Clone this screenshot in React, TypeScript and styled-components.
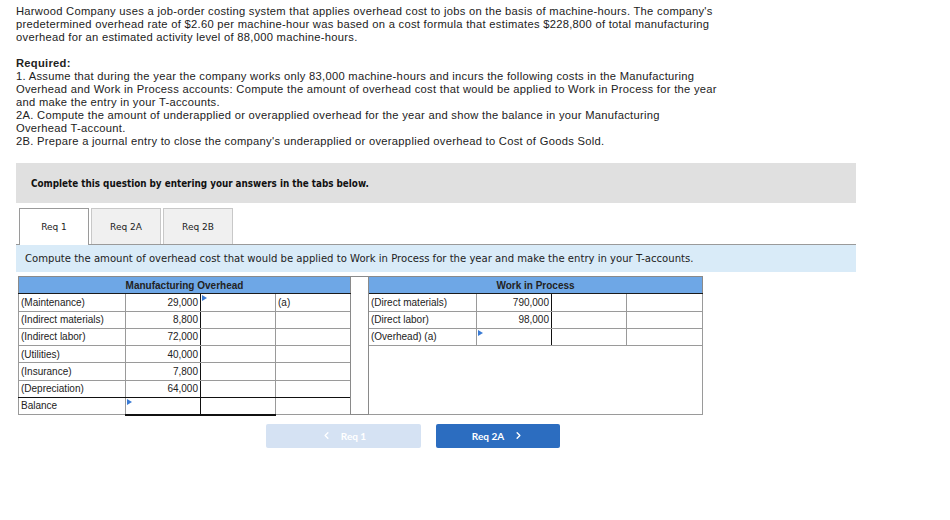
import React from 'react';
import styled, { createGlobalStyle, css } from 'styled-components';
import { ChevronLeft, ChevronRight } from 'lucide-react';

const GlobalStyle = createGlobalStyle`
    body {
        margin: 0;
        background: #ffffff;
        font-family: 'Liberation Sans', Arial, sans-serif;
    }
`;

const overheadRows = [
    { label: '(Maintenance)', amount: '29,000', right: '(a)' },
    { label: '(Indirect materials)', amount: '8,800' },
    { label: '(Indirect labor)', amount: '72,000' },
    { label: '(Utilities)', amount: '40,000' },
    { label: '(Insurance)', amount: '7,800' },
    { label: '(Depreciation)', amount: '64,000' },
];

const wipRows = [
    { label: '(Direct materials)', amount: '790,000' },
    { label: '(Direct labor)', amount: '98,000' },
    { label: '(Overhead) (a)', amount: '', flag: true },
];

export default function App() {
    return <Page>
        <GlobalStyle />
        <Paragraph>
            <Line>Harwood Company uses a job-order costing system that applies overhead cost to jobs on the basis of machine-hours. The company's</Line>
            <Line>predetermined overhead rate of $2.60 per machine-hour was based on a cost formula that estimates $228,800 of total manufacturing</Line>
            <Line>overhead for an estimated activity level of 88,000 machine-hours.</Line>
        </Paragraph>
        <Paragraph>
            <Line $bold>Required:</Line>
            <Line>1. Assume that during the year the company works only 83,000 machine-hours and incurs the following costs in the Manufacturing</Line>
            <Line>Overhead and Work in Process accounts: Compute the amount of overhead cost that would be applied to Work in Process for the year</Line>
            <Line>and make the entry in your T-accounts.</Line>
            <Line>2A. Compute the amount of underapplied or overapplied overhead for the year and show the balance in your Manufacturing</Line>
            <Line>Overhead T-account.</Line>
            <Line>2B. Prepare a journal entry to close the company's underapplied or overapplied overhead to Cost of Goods Sold.</Line>
        </Paragraph>

        <Panel>
            <Banner>Complete this question by entering your answers in the tabs below.</Banner>

            <TabBar>
                <Tab $active>Req 1</Tab>
                <Tab>Req 2A</Tab>
                <Tab>Req 2B</Tab>
            </TabBar>

            <Instruction>
                Compute the amount of overhead cost that would be applied to Work in Process for the year and make the entry in your T-accounts.
            </Instruction>

            <TTable>
                <colgroup>
                    <col style={{ width: 107 }} />
                    <col style={{ width: 75 }} />
                    <col style={{ width: 75 }} />
                    <col style={{ width: 75 }} />
                    <col style={{ width: 18 }} />
                    <col style={{ width: 108 }} />
                    <col style={{ width: 75 }} />
                    <col style={{ width: 75 }} />
                    <col style={{ width: 76 }} />
                </colgroup>
                <tbody>
                    <Row>
                        <HeadCell colSpan={4}>Manufacturing Overhead</HeadCell>
                        <Spacer rowSpan={8} />
                        <HeadCell colSpan={4}>Work in Process</HeadCell>
                    </Row>
                    {overheadRows.map((r, i) => {
                        const last = i === overheadRows.length - 1;
                        const w = wipRows[i];
                        return <Row key={r.label}>
                            <Cell $bottom={last ? 'dark' : undefined}>{r.label}</Cell>
                            <Cell $num $tline $bottom={last ? 'dark' : undefined}>{r.amount}</Cell>
                            <Cell $flag={i === 0} $bottom={last ? 'dark' : undefined}></Cell>
                            <Cell $bottom={last ? 'dark' : undefined}>{r.right}</Cell>
                            {w && <>
                                <Cell>{w.label}</Cell>
                                <Cell $num $tline $flag={w.flag}>{w.amount}</Cell>
                                <Cell></Cell>
                                <Cell></Cell>
                            </>}
                            {i === wipRows.length && <Cell colSpan={4} rowSpan={4}></Cell>}
                        </Row>;
                    })}
                    <Row>
                        <Cell>Balance</Cell>
                        <Cell $tline $flag $bottom="thick"></Cell>
                        <Cell $bottom="thick"></Cell>
                        <Cell></Cell>
                    </Row>
                </tbody>
            </TTable>

            <NavBar>
                <NavButton $disabled>
                    <ChevronLeft size={11} strokeWidth={3} />
                    Req 1
                </NavButton>
                <NavButton>
                    Req 2A
                    <ChevronRight size={11} strokeWidth={3} />
                </NavButton>
            </NavBar>
        </Panel>
    </Page>;
}

const Page = styled.div`
    padding: 5px 16px 20px 16px;
    color: #222222;
`;

const Paragraph = styled.div`
    margin: 0 0 13px 0;
    font-size: 11.2px;
    letter-spacing: 0.28px;
`;

const Line = styled.div<{ $bold?: boolean }>`
    height: 13px;
    line-height: 13px;
    white-space: nowrap;
    font-weight: ${({ $bold }) => ($bold ? 700 : 400)};
`;

const Panel = styled.div`
    width: 840px;
    margin-top: 15px;
`;

const Banner = styled.div`
    height: 40px;
    background: #e0e0e0;
    display: flex;
    align-items: center;
    padding-left: 15px;
    font-family: 'DejaVu Sans Condensed', 'DejaVu Sans', sans-serif;
    font-weight: 700;
    font-size: 9.8px;
    color: #111111;
`;

const TabBar = styled.div`
    display: flex;
    gap: 2px;
    margin-top: 5px;
    padding-left: 3px;
    border-bottom: 1px solid #9a9a9a;
`;

const Tab = styled.div<{ $active?: boolean }>`
    width: 70px;
    height: 36px;
    box-sizing: border-box;
    display: flex;
    align-items: center;
    justify-content: center;
    font-family: 'DejaVu Sans', sans-serif;
    font-size: 9px;
    color: #222222;
    background: #f0f0f0;
    border: 1px solid #c8c8c8;
    border-bottom: none;

    ${({ $active }) => $active && css`
        background: #ffffff;
        border-color: #9a9a9a;
        margin-bottom: -1px;
        height: 37px;
    `}
`;

const Instruction = styled.div`
    height: 27px;
    background: #d9ebf8;
    display: flex;
    align-items: center;
    padding-left: 9px;
    font-family: 'DejaVu Sans', sans-serif;
    font-size: 10.08px;
    color: #222222;
`;

const TTable = styled.table`
    border-collapse: collapse;
    table-layout: fixed;
    width: 685px;
    margin: 4px 0 0 2px;
    font-family: 'Liberation Sans', Arial, sans-serif;
    font-size: 10px;
    color: #222222;
`;

const Row = styled.tr`
    height: 17.25px;
`;

const HeadCell = styled.td`
    background: #6ea7e6;
    border: 1px solid #8a8a8a;
    border-bottom: 1px solid #1a1a1a;
    text-align: center;
    font-weight: 700;
    padding: 0;
`;

const Spacer = styled.td`
    border: 1px solid #8a8a8a;
    background: #ffffff;
    padding: 0;
`;

const Cell = styled.td<{ $num?: boolean; $tline?: boolean; $flag?: boolean; $bottom?: 'dark' | 'thick' }>`
    position: relative;
    border: 1px solid #9a9a9a;
    padding: 0 2px;
    white-space: nowrap;
    overflow: hidden;
    vertical-align: middle;
    text-align: ${({ $num }) => ($num ? 'right' : 'left')};

    ${({ $tline }) => $tline && css`
        border-right-color: #111111;
    `}

    ${({ $bottom }) => $bottom === 'dark' && css`
        border-bottom-color: #111111;
    `}

    ${({ $bottom }) => $bottom === 'thick' && css`
        border-bottom: 2px solid #111111;
    `}

    ${({ $flag }) => $flag && css`
        &::before {
            content: '';
            position: absolute;
            top: 1px;
            left: 1px;
            border-left: 5px solid #3a7bd5;
            border-top: 3px solid transparent;
            border-bottom: 3px solid transparent;
        }
    `}
`;

const NavBar = styled.div`
    display: flex;
    gap: 15px;
    margin-top: 8px;
    padding-left: 250px;
`;

const NavButton = styled.div<{ $disabled?: boolean }>`
    height: 24px;
    width: 124px;
    display: flex;
    align-items: center;
    justify-content: center;
    gap: 9px;
    border-radius: 2px;
    background: #2c6dc0;
    color: #ffffff;
    font-family: 'Lato', 'Liberation Sans', sans-serif;
    font-weight: 700;
    font-size: 10px;

    ${({ $disabled }) => $disabled && css`
        width: 155px;
        background: #d5e2f3;
    `}
`;
